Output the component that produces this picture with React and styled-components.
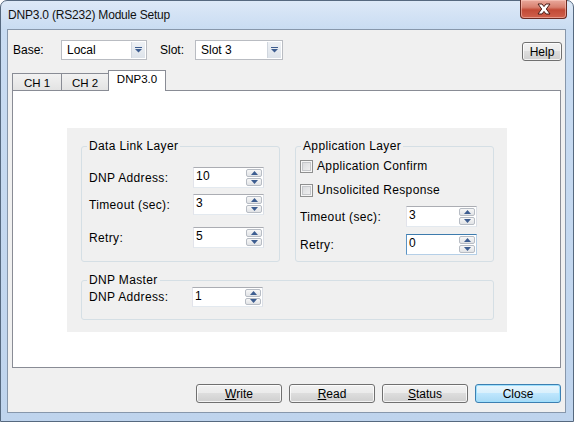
import styled, { createGlobalStyle } from "styled-components";

const GlobalStyle = createGlobalStyle`
  html, body { margin: 0; padding: 0; background: #ffffff; }
  body {
    font-family: "Liberation Sans", Arial, sans-serif;
    font-size: 12px;
    color: #000;
  }
  *, *::before, *::after { box-sizing: border-box; }
`;

const Window = styled.div`
  width: 574px;
  height: 422px;
  display: flex;
  flex-direction: column;
  padding: 0 7px 8px 6px;
  border: 1px solid #56697f;
  border-radius: 7px 7px 0 0;
  background: linear-gradient(#dde9f7 0px, #c9dcf2 28px, #bfd4ed 100%);
`;

const TitleBar = styled.div`
  height: 28px;
  display: flex;
  justify-content: space-between;
  align-items: flex-start;
  flex-shrink: 0;
`;

const Title = styled.div`
  margin: 7px 0 0 1px;
  line-height: 14px;
  letter-spacing: -0.2px;
  color: #111;
`;

const CloseButton = styled.div`
  width: 47px;
  height: 19px;
  margin: -1px -1px 0 0;
  border: 1px solid #6a2a22;
  border-top: none;
  border-radius: 0 0 4px 4px;
  background: linear-gradient(#e9a99c 0%, #d8806f 40%, #c24a36 55%, #d0614c 100%);
  box-shadow: inset 0 0 0 1px rgba(255, 210, 200, 0.5);
  display: flex;
  align-items: center;
  justify-content: center;
`;

const Client = styled.div`
  flex: 1;
  display: flex;
  flex-direction: column;
  padding: 0 4px;
  background: #f0f0f0;
  border: 1px solid #8797ab;
`;

const TopBar = styled.div`
  margin-top: 10px;
  padding-left: 1px;
  height: 21px;
  display: flex;
  align-items: flex-start;
`;

const TopLabel = styled.span`
  width: ${(p) => p.$w}px;
  margin-left: ${(p) => p.$ml || 0}px;
  line-height: 20px;
`;

const Combo = styled.div`
  width: ${(p) => p.$w}px;
  height: 20px;
  display: flex;
  background: #fff;
  border: 1px solid #b9bcc2;
`;

const ComboText = styled.span`
  flex: 1;
  padding-left: 5px;
  line-height: 18px;
`;

const ComboArrow = styled.span`
  width: 14px;
  margin: 1px;
  background: linear-gradient(#eef1f5, #dde3ea);
  border-left: 1px solid #d0d6de;
  display: flex;
  align-items: center;
  justify-content: center;
`;

const Button = styled.button`
  width: ${(p) => p.$w || 86}px;
  height: 19px;
  padding: 0;
  font: inherit;
  color: #000;
  line-height: 16px;
  border: 1px solid ${(p) => (p.$default ? "#3c7fb1" : "#707070")};
  border-radius: 3px;
  background: ${(p) =>
    p.$default
      ? "linear-gradient(#eaf6fd 0%, #d9f0fc 45%, #bee6fd 50%, #a7d9f5 100%)"
      : "linear-gradient(#f2f2f2 0%, #ebebeb 45%, #dddddd 50%, #cfcfcf 100%)"};
  box-shadow: inset 0 0 0 1px
    ${(p) => (p.$default ? "#9fe0fd" : "rgba(255, 255, 255, 0.75)")};
`;

const HelpButton = styled(Button)`
  margin: 2px -1px 0 auto;
`;

const TabRow = styled.div`
  margin-top: 9px;
  height: 20px;
  display: flex;
  align-items: flex-end;
  position: relative;
  z-index: 1;
`;

const Tab = styled.div`
  width: ${(p) => p.$w}px;
  margin-left: ${(p) => p.$ml || 0}px;
  height: ${(p) => (p.$active ? 21 : 17)}px;
  margin-bottom: ${(p) => (p.$active ? -1 : 0)}px;
  padding-top: ${(p) => (p.$active ? 2 : 3)}px;
  border: 1px solid #898c95;
  border-bottom: none;
  background: ${(p) =>
    p.$active ? "#ffffff" : "linear-gradient(#f2f2f2, #e3e3e3)"};
  font-size: 11.5px;
  line-height: 13px;
  text-align: center;
  position: relative;
  z-index: ${(p) => (p.$active ? 2 : 1)};
`;

const TabPanel = styled.div`
  height: 278px;
  padding: 37px 0 0 54px;
  background: #ffffff;
  border: 1px solid #898c95;
`;

const InnerPanel = styled.div`
  width: 440px;
  height: 204px;
  padding: 18px 13px 0 14px;
  background: #f0f0f0;
  letter-spacing: 0.35px;
`;

const GroupRow = styled.div`
  display: flex;
  gap: 15px;
`;

const Group = styled.div`
  position: relative;
  width: ${(p) => p.$w}px;
  height: ${(p) => p.$h}px;
  margin-top: ${(p) => p.$mt || 0}px;
  padding-left: ${(p) => p.$pl}px;
  border: 1px solid #d5dfe5;
  border-radius: 3px;
`;

const Legend = styled.span`
  position: absolute;
  top: -8px;
  left: 5px;
  padding: 0 2px;
  line-height: 14px;
  background: #f0f0f0;
`;

const FieldRow = styled.div`
  display: flex;
  align-items: center;
  margin-top: ${(p) => p.$mt}px;
`;

const FieldLabel = styled.span`
  width: ${(p) => p.$w}px;
`;

const SpinBox = styled.div`
  width: 71px;
  height: ${(p) => p.$h || 21}px;
  display: flex;
  background: #fff;
  border: 1px solid;
  border-color: ${(p) =>
    p.$focused
      ? "#3d7bad #b5cfe7 #b5cfe7 #5a93c4"
      : "#abadb3 #dbdfe6 #e3e9ef #e2e3ea"};
`;

const SpinValue = styled.span`
  flex: 1;
  padding: 1px 0 0 2px;
  line-height: 14px;
`;

const SpinButtons = styled.div`
  width: 17px;
  padding: 1px 1px 1px 0;
  display: flex;
  flex-direction: column;
  gap: 1px;
`;

const SpinButton = styled.span`
  flex: 1;
  display: flex;
  align-items: center;
  justify-content: center;
  border: 1px solid #b7bcc4;
  border-radius: 2px;
  background: linear-gradient(#f7f7f7, #e1e3e6);
`;

const CheckRow = styled.label`
  display: flex;
  align-items: center;
  gap: 4px;
  margin-top: ${(p) => p.$mt}px;
  height: 13px;
  line-height: 13px;
`;

const CheckBox = styled.span`
  width: 13px;
  height: 13px;
  border: 1px solid #8e8f8f;
  background: linear-gradient(135deg, #d4d6d9, #f4f4f4);
  box-shadow: inset 0 0 0 1px #f6f6f6, inset 0 0 0 2px #c5c7ca;
`;

const ButtonBar = styled.div`
  margin-top: 16px;
  display: flex;
  justify-content: flex-end;
  gap: 7px;
`;

const CloseGlyph = () => (
  <svg width="14" height="12" viewBox="0 0 14 12">
    <path
      d="M1 1 H5 L7 3.6 L9 1 H13 L9.3 6 L13 11 H9 L7 8.4 L5 11 H1 L4.7 6 Z"
      fill="#ffffff"
      stroke="#4a1a14"
      strokeWidth="1"
      strokeLinejoin="round"
    />
  </svg>
);

const DropGlyph = () => (
  <svg width="7" height="6" viewBox="0 0 7 6">
    <rect x="0" y="0" width="7" height="1" fill="#3d5d90" />
    <path d="M0 2 H7 L3.5 5.5 Z" fill="#3d5d90" />
  </svg>
);

const Arrow = ({ up }) => (
  <svg width="7" height="4" viewBox="0 0 7 4">
    <path d={up ? "M0 4 H7 L3.5 0 Z" : "M0 0 H7 L3.5 4 Z"} fill="#3d5d90" />
  </svg>
);

const Spin = ({ value, h, focused }) => (
  <SpinBox $h={h} $focused={focused}>
    <SpinValue>{value}</SpinValue>
    <SpinButtons>
      <SpinButton>
        <Arrow up />
      </SpinButton>
      <SpinButton>
        <Arrow />
      </SpinButton>
    </SpinButtons>
  </SpinBox>
);

export default function App() {
  return (
    <>
      <GlobalStyle />
      <Window>
        <TitleBar>
          <Title>DNP3.0 (RS232) Module Setup</Title>
          <CloseButton>
            <CloseGlyph />
          </CloseButton>
        </TitleBar>

        <Client>
          <TopBar>
            <TopLabel $w={48}>Base:</TopLabel>
            <Combo $w={86}>
              <ComboText>Local</ComboText>
              <ComboArrow>
                <DropGlyph />
              </ComboArrow>
            </Combo>
            <TopLabel $w={35} $ml={13}>
              Slot:
            </TopLabel>
            <Combo $w={88}>
              <ComboText>Slot 3</ComboText>
              <ComboArrow>
                <DropGlyph />
              </ComboArrow>
            </Combo>
            <HelpButton $w={40}>Help</HelpButton>
          </TopBar>

          <TabRow>
            <Tab $w={50}>CH 1</Tab>
            <Tab $w={48} $ml={-1}>
              CH 2
            </Tab>
            <Tab $w={58} $ml={-1} $active>
              DNP3.0
            </Tab>
          </TabRow>

          <TabPanel>
            <InnerPanel>
              <GroupRow>
                <Group $w={199} $h={116} $pl={7}>
                  <Legend>Data Link Layer</Legend>
                  <FieldRow $mt={20}>
                    <FieldLabel $w={104}>DNP Address:</FieldLabel>
                    <Spin value="10" />
                  </FieldRow>
                  <FieldRow $mt={6}>
                    <FieldLabel $w={104}>Timeout (sec):</FieldLabel>
                    <Spin value="3" />
                  </FieldRow>
                  <FieldRow $mt={12}>
                    <FieldLabel $w={104}>Retry:</FieldLabel>
                    <Spin value="5" />
                  </FieldRow>
                </Group>

                <Group $w={199} $h={116} $pl={4}>
                  <Legend>Application Layer</Legend>
                  <CheckRow $mt={13}>
                    <CheckBox />
                    Application Confirm
                  </CheckRow>
                  <CheckRow $mt={11}>
                    <CheckBox />
                    Unsolicited Response
                  </CheckRow>
                  <FieldRow $mt={9}>
                    <FieldLabel $w={106}>Timeout (sec):</FieldLabel>
                    <Spin value="3" />
                  </FieldRow>
                  <FieldRow $mt={7}>
                    <FieldLabel $w={106}>Retry:</FieldLabel>
                    <Spin value="0" focused />
                  </FieldRow>
                </Group>
              </GroupRow>

              <Group $w={413} $h={40} $mt={18} $pl={7}>
                <Legend>DNP Master</Legend>
                <FieldRow $mt={6}>
                  <FieldLabel $w={103}>DNP Address:</FieldLabel>
                  <Spin value="1" h={20} />
                </FieldRow>
              </Group>
            </InnerPanel>
          </TabPanel>

          <ButtonBar>
            <Button>
              <u>W</u>rite
            </Button>
            <Button>
              <u>R</u>ead
            </Button>
            <Button>
              <u>S</u>tatus
            </Button>
            <Button $default>Close</Button>
          </ButtonBar>
        </Client>
      </Window>
    </>
  );
}
